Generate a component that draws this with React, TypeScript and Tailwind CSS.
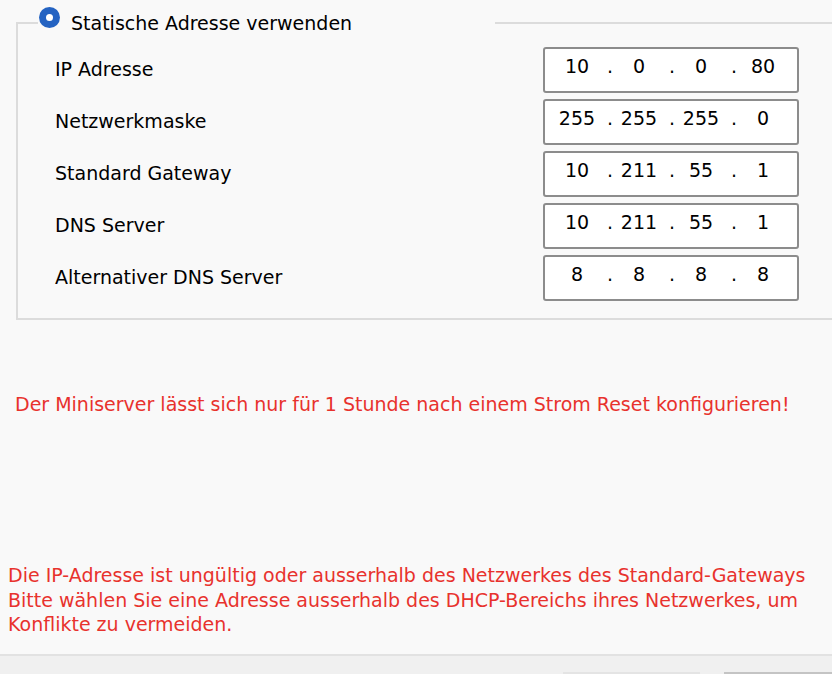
const rows = [
  { label: "IP Adresse", parts: ["10", "0", "0", "80"] },
  { label: "Netzwerkmaske", parts: ["255", "255", "255", "0"] },
  { label: "Standard Gateway", parts: ["10", "211", "55", "1"] },
  { label: "DNS Server", parts: ["10", "211", "55", "1"] },
  { label: "Alternativer DNS Server", parts: ["8", "8", "8", "8"] },
];

function IpBox({ parts }: { parts: string[] }) {
  return (
    <div className="w-[256px] h-[46px] shrink-0 border-2 border-[#8c8c8c] rounded-[3px] bg-white flex items-start pl-[6px]">
      {parts.map((p, i) => (
        <div key={i} className="flex">
          {i > 0 && <span className="w-[10px] pl-[4px] leading-[35px]">.</span>}
          <span className="w-[52px] text-center leading-[35px]">{p}</span>
        </div>
      ))}
    </div>
  );
}

export default function App() {
  return (
    <div className="w-[832px] h-[674px] overflow-hidden bg-[#f9f9f9] flex flex-col text-[19px] text-black font-['DejaVu_Sans',sans-serif]">
      <div className="flex-1">
        {/* group box with radio caption */}
        <div className="relative mt-[22px] ml-[16px] w-[840px] border-2 border-[#dcdcdc] pt-[23px] pb-[17px] flex flex-col gap-[6px]">
          <div className="absolute left-[20px] top-[-17px] w-[457px] h-[30px] bg-[#f9f9f9] flex">
            <div className="ml-[1px] w-[21px] h-[21px] rounded-full bg-[#2463c2] flex items-center justify-center">
              <div className="w-[7px] h-[7px] rounded-full bg-white" />
            </div>
            <span className="ml-[11px] leading-[30px] pt-[1px]">Statische Adresse verwenden</span>
          </div>
          {rows.map((r) => (
            <div key={r.label} className="flex">
              <div className="w-[525px] shrink-0 pl-[37px] leading-[44px]">{r.label}</div>
              <IpBox parts={r.parts} />
            </div>
          ))}
        </div>

        <p className="mt-[72px] ml-[15px] leading-[24px] text-[#e8322d]">
          Der Miniserver lässt sich nur für 1 Stunde nach einem Strom Reset konfigurieren!
        </p>

        <p className="mt-[147px] ml-[8px] mr-[10px] leading-[24.5px] text-[#e8322d]">
          Die IP-Adresse ist ungültig oder ausserhalb des Netzwerkes des Standard-Gateways
          <br />
          Bitte wählen Sie eine Adresse ausserhalb des DHCP-Bereichs ihres Netzwerkes, um
          <br />
          Konflikte zu vermeiden.
        </p>
      </div>

      {/* footer with button tops */}
      <div className="h-[20px] shrink-0 border-t-2 border-[#e2e2e2] bg-[#f0f0f0] flex items-end gap-[24px] pl-[563px]">
        <div className="w-[137px] h-[2px] shrink-0 bg-[#e4e4e4]" />
        <div className="w-[137px] h-[2px] shrink-0 bg-[#c4c4c4]" />
      </div>
    </div>
  );
}
